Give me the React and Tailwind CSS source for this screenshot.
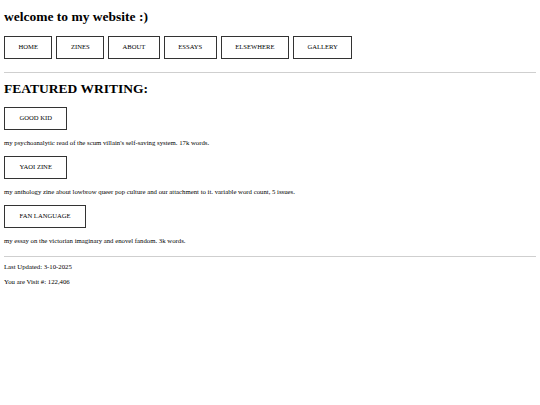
import React from 'react';

const navItems = ['HOME', 'ZINES', 'ABOUT', 'ESSAYS', 'ELSEWHERE', 'GALLERY'];

const writing = [
  { title: 'GOOD KID', blurb: "my psychoanalytic read of the scum villain's self-saving system. 17k words." },
  { title: 'YAOI ZINE', blurb: 'my anthology zine about lowbrow queer pop culture and our attachment to it. variable word count, 5 issues.' },
  { title: 'FAN LANGUAGE', blurb: 'my essay on the victorian imaginary and enovel fandom. 3k words.' },
];

const Box = ({ children, wide }) => (
  <a
    href="#"
    className={
      wide
        ? 'flex h-[23px] items-center border border-[#333] bg-white px-[14.5px] text-[6.6px] leading-none text-black'
        : 'flex h-[23px] items-center border border-[#333] bg-white px-[13.5px] text-[6.6px] leading-none text-black'
    }
  >
    {children}
  </a>
);

export default function App() {
  return (
    <div className="min-h-[405px] bg-white px-[4px] font-['Liberation_Serif',serif] text-black">
      <h1 className="pt-[7px] text-[13.5px] font-bold leading-[20px]">welcome to my website :)</h1>

      <nav className="mt-[9px] flex gap-[4px]">
        {navItems.map((item) => (
          <Box key={item}>{item}</Box>
        ))}
      </nav>

      <hr className="mt-[13px] border-0 border-t border-[#cfcfcf]" />

      <h2 className="mt-[6px] text-[13.5px] font-bold leading-[20px]">FEATURED WRITING:</h2>

      <div className="mt-[8px]">
        {writing.map((w, i) => (
          <div key={w.title} className={i > 0 ? 'mt-[8px]' : ''}>
            <div className="flex">
              <Box wide>{w.title}</Box>
            </div>
            <p className="mt-[8px] text-[6.75px] leading-[10px]">{w.blurb}</p>
          </div>
        ))}
      </div>

      <hr className="mt-[10px] border-0 border-t border-[#cfcfcf]" />

      <p className="mt-[5px] text-[6.75px] leading-[10px]">Last Updated: 3-10-2025</p>
      <p className="mt-[5px] text-[6.75px] leading-[10px]">You are Visit #: 122,406</p>
    </div>
  );
}
